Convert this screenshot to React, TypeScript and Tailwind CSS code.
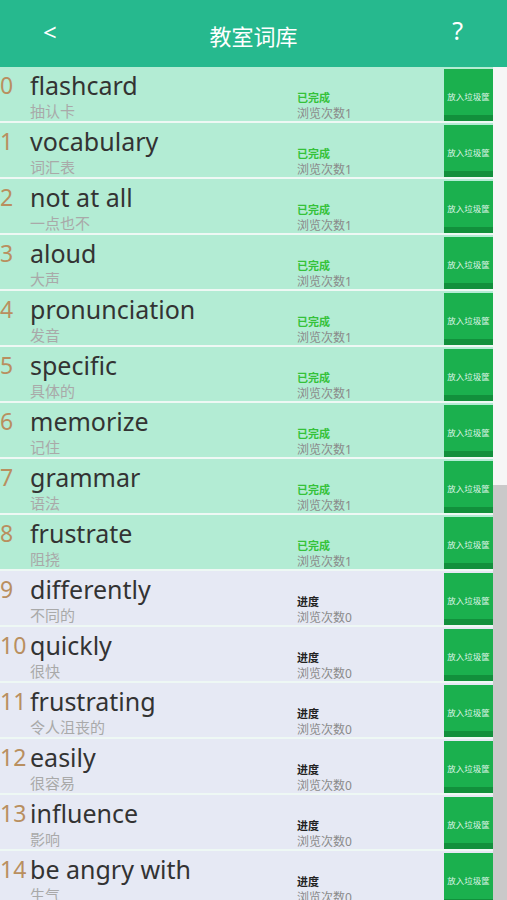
import React from "react";

const rows: { w: string; m: string; done: boolean }[] = [
  { w: "flashcard", m: "抽认卡", done: true },
  { w: "vocabulary", m: "词汇表", done: true },
  { w: "not at all", m: "一点也不", done: true },
  { w: "aloud", m: "大声", done: true },
  { w: "pronunciation", m: "发音", done: true },
  { w: "specific", m: "具体的", done: true },
  { w: "memorize", m: "记住", done: true },
  { w: "grammar", m: "语法", done: true },
  { w: "frustrate", m: "阻挠", done: true },
  { w: "differently", m: "不同的", done: false },
  { w: "quickly", m: "很快", done: false },
  { w: "frustrating", m: "令人沮丧的", done: false },
  { w: "easily", m: "很容易", done: false },
  { w: "influence", m: "影响", done: false },
  { w: "be angry with", m: "生气", done: false },
];

const font = { fontFamily: '"Noto Sans", "Noto Sans CJK SC", sans-serif' };

export default function App() {
  return (
    <div className="w-[507px] h-[900px] overflow-hidden flex flex-col bg-white" style={font}>
      <div className="h-[67px] shrink-0 bg-[#26b98e] flex items-center relative text-white">
        <div className="w-[100px] pl-[43px] text-[24px] leading-none -mt-[3px]">&lt;</div>
        <div className="flex-1 text-center text-[22px] leading-none mt-[5px]">教室词库</div>
        <div className="w-[100px] pr-[44px] text-right text-[25px] leading-none -mt-[6px]">?</div>
      </div>
      <div className="flex flex-1 min-h-0">
        <div className="flex-1 flex flex-col">
          {rows.map((r, i) => (
            <div
              key={i}
              className={`h-[56px] shrink-0 flex border-b-2 border-[#eef8f4] ${r.done ? "bg-[#b3ecd4]" : "bg-[#e6e9f4]"}`}
            >
              <div className="w-[30px] shrink-0 text-[23px] leading-[32px] pt-[2px] text-[#b98f5f]">{i}</div>
              <div className="w-[267px] shrink-0 flex flex-col">
                <div className="text-[25px] leading-[32px] mt-[2px] text-[#333] whitespace-nowrap">{r.w}</div>
                <div className="text-[15px] leading-[20px] text-[#a9a9a9]">{r.m}</div>
              </div>
              <div className="flex-1 flex flex-col pt-[23px]">
                {r.done ? (
                  <div className="text-[11px] leading-[16px] font-bold text-[#35c23a]">已完成</div>
                ) : (
                  <div className="text-[11px] leading-[16px] font-bold text-[#222]">进度</div>
                )}
                <div className="text-[12px] leading-[16px] text-[#8a8a8a]">浏览次数{r.done ? 1 : 0}</div>
              </div>
              <div className="w-[49px] shrink-0 pt-[2px]">
                <div className="h-[52px] bg-[#1bb04e] flex flex-col">
                  <div className="flex-1 flex justify-center pt-[24px] text-[8.5px] leading-none text-[#dff5e6] whitespace-nowrap">
                    放入垃圾筐
                  </div>
                  <div className="h-[6px] bg-[#12903c]" />
                </div>
              </div>
            </div>
          ))}
        </div>
        <div className="w-[14px] shrink-0 flex flex-col">
          <div className="h-[418px] bg-[#f6f6f6]" />
          <div className="flex-1 bg-[#c9c9c9]" />
        </div>
      </div>
    </div>
  );
}
